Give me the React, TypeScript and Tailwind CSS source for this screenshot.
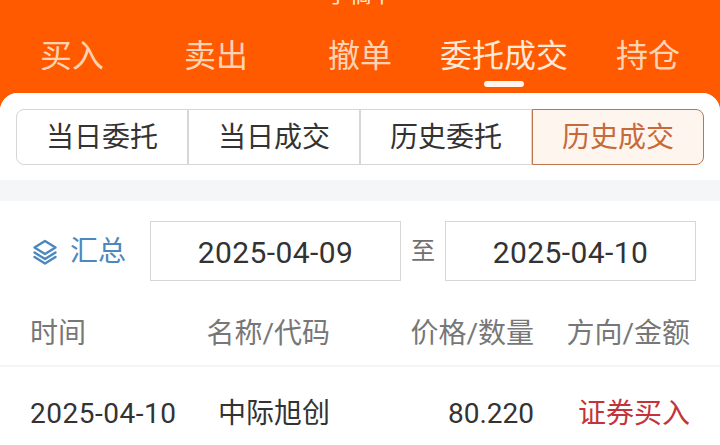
const navTabs = [
  { label: '买入' },
  { label: '卖出' },
  { label: '撤单' },
  { label: '委托成交', active: true },
  { label: '持仓' },
];

const subTabs = ['当日委托', '当日成交', '历史委托', '历史成交'];

export default function App() {
  return (
    <div className="h-[445px] w-[720px] overflow-hidden bg-[#ff5a00] font-['Roboto','Noto_Sans_CJK_SC',sans-serif]">
      {/* Header */}
      <div className="h-[9px] overflow-hidden">
        <div className="-mt-[20px] text-center text-[22px] leading-[30px] text-[#ffe9d9]">手稿中</div>
      </div>
      <div className="flex h-[84px] pt-[29px]">
        {navTabs.map((tab) => (
          <div key={tab.label} className="relative flex h-[36px] w-[144px] justify-center">
            <span className={`whitespace-nowrap text-[32px] leading-[36px] ${tab.active ? 'text-[#ffe9d9]' : 'text-[#ffd3b3]'}`}>
              {tab.label}
            </span>
            {tab.active && (
              <span className="absolute top-[43px] h-[6px] w-10 rounded-full bg-[#fff6ef]" />
            )}
          </div>
        ))}
      </div>

      {/* Body */}
      <div className="h-[352px] rounded-t-[18px] bg-white">
        <div className="flex h-[87px] items-start rounded-t-[18px] bg-white px-4 pt-4">
          <div className="flex h-[56px] w-[688px]">
            {subTabs.map((tab, i) => (
              <div
                key={tab}
                className={`flex h-[56px] flex-1 items-center justify-center border pt-[2px] text-[28px] ${
                  i === 3
                    ? 'rounded-r-lg border-[#b9764a] bg-[#fff5ef] text-[#c8693a]'
                    : `border-[#d6d6d6] text-[#333333] ${i === 0 ? 'rounded-l-lg' : '-mr-px border-r-2'}`
                }`}
              >
                {tab}
              </div>
            ))}
          </div>
        </div>
        <div className="h-[21px] bg-[#f5f6f8]" />

        <div className="box-content flex h-[60px] items-center pl-[33px] pr-6 pt-5">
          <svg width="24" height="26" viewBox="0 0 24 26" fill="none" stroke="#4c88bd" strokeWidth="2.4" strokeLinejoin="round" strokeLinecap="round" className="mt-[2px]">
            <path d="M12 2 L22.5 8.5 L12 15 L1.5 8.5 Z" />
            <path d="M1.5 13.5 L12 20 L22.5 13.5" />
            <path d="M1.5 18 L12 24.5 L22.5 18" />
          </svg>
          <span className="ml-[13px] pt-[2px] text-[28px] text-[#4c88bd]">汇总</span>
          <div className="ml-6 flex h-[60px] w-[251px] items-center justify-center border border-[#d6d6d6] pt-[2px] text-[30px] tracking-[0.4px] text-[#333333]">
            2025-04-09
          </div>
          <span className="mx-[10px] text-[24px] text-[#707070]">至</span>
          <div className="flex h-[60px] w-[251px] items-center justify-center border border-[#d6d6d6] pt-[2px] text-[30px] tracking-[0.4px] text-[#333333]">
            2025-04-10
          </div>
        </div>

        <div className="mt-[20px] flex h-[66px] items-center border-b-2 border-[#f4f4f4] px-[30px] pt-[2px] text-[28px] text-[#777777]">
          <span className="w-[146px]">时间</span>
          <span className="w-[154px] text-right">名称/代码</span>
          <span className="w-[204px] text-right">价格/数量</span>
          <span className="flex-1 text-right">方向/金额</span>
        </div>
        <div className="flex h-[90px] px-[30px] pt-[29px] text-[28px] leading-[36px] text-[#333333]">
          <span className="w-[146px] whitespace-nowrap tracking-[0.5px]">2025-04-10</span>
          <span className="w-[154px] text-right">中际旭创</span>
          <span className="w-[204px] text-right">80.220</span>
          <span className="flex-1 text-right text-[#c4333a]">证券买入</span>
        </div>
      </div>
    </div>
  );
}
